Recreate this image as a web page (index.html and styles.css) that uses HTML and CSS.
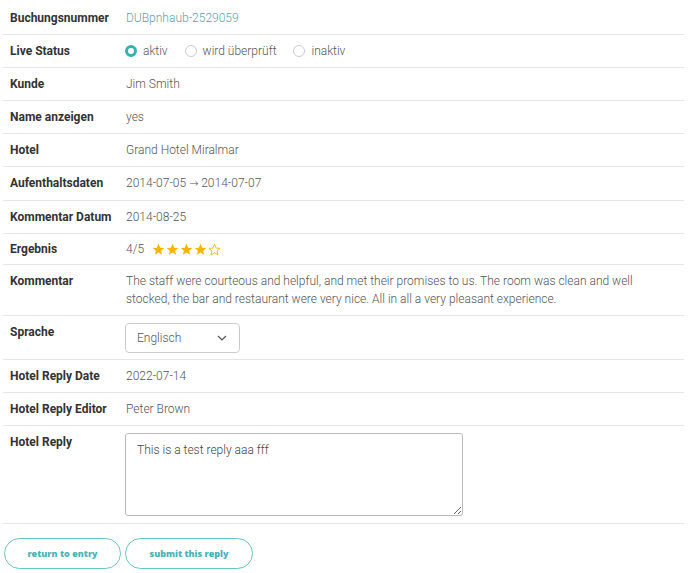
FILE: index.html
```html
<!DOCTYPE html>
<html lang="de">
<head>
    <meta charset="UTF-8">
    <meta name="viewport" content="width=device-width, initial-scale=1.0">
    <title>Hotel Reply</title>
    <link rel="stylesheet" href="styles.css">
</head>
<body>
    <table class="details">
        <tr>
            <th>Buchungsnummer</th>
            <td class="booking">DUBpnhaub-2529059</td>
        </tr>
        <tr>
            <th>Live Status</th>
            <td>
                <label class="radio"><input type="radio" name="status" checked><span class="dot"></span>aktiv</label>
                <label class="radio"><input type="radio" name="status"><span class="dot"></span>wird überprüft</label>
                <label class="radio"><input type="radio" name="status"><span class="dot"></span>inaktiv</label>
            </td>
        </tr>
        <tr>
            <th>Kunde</th>
            <td>Jim Smith</td>
        </tr>
        <tr>
            <th>Name anzeigen</th>
            <td>yes</td>
        </tr>
        <tr>
            <th>Hotel</th>
            <td>Grand Hotel Miralmar</td>
        </tr>
        <tr>
            <th>Aufenthaltsdaten</th>
            <td>2014-07-05 <span class="arrow">&rarr;</span> 2014-07-07</td>
        </tr>
        <tr>
            <th>Kommentar Datum</th>
            <td>2014-08-25</td>
        </tr>
        <tr class="short">
            <th>Ergebnis</th>
            <td class="rating">4/5
                <span class="stars"><svg viewBox="0 0 24 24"><path d="M12 1.5l3.1 7.1 7.6.6-5.8 5 1.8 7.5L12 17.7l-6.7 4 1.8-7.5-5.8-5 7.6-.6z" fill="#f7b500"/></svg><svg viewBox="0 0 24 24"><path d="M12 1.5l3.1 7.1 7.6.6-5.8 5 1.8 7.5L12 17.7l-6.7 4 1.8-7.5-5.8-5 7.6-.6z" fill="#f7b500"/></svg><svg viewBox="0 0 24 24"><path d="M12 1.5l3.1 7.1 7.6.6-5.8 5 1.8 7.5L12 17.7l-6.7 4 1.8-7.5-5.8-5 7.6-.6z" fill="#f7b500"/></svg><svg viewBox="0 0 24 24"><path d="M12 1.5l3.1 7.1 7.6.6-5.8 5 1.8 7.5L12 17.7l-6.7 4 1.8-7.5-5.8-5 7.6-.6z" fill="#f7b500"/></svg><svg viewBox="0 0 24 24"><path d="M12 2.5l3 6.8 7.3.6-5.6 4.8 1.7 7.2L12 18.1l-6.4 3.8 1.7-7.2-5.6-4.8 7.3-.6z" fill="none" stroke="#f7b500" stroke-width="1.7" stroke-linejoin="round"/></svg></span>
            </td>
        </tr>
        <tr>
            <th>Kommentar</th>
            <td>The staff were courteous and helpful, and met their promises to us. The room was clean and well stocked, the bar and restaurant were very nice. All in all a very pleasant experience.</td>
        </tr>
        <tr class="select-row">
            <th>Sprache</th>
            <td>
                <div class="select">
                    <span>Englisch</span>
                    <svg width="10" height="6" viewBox="0 0 10 6"><path d="M1 1l4 4 4-4" fill="none" stroke="#555" stroke-width="1.2"/></svg>
                </div>
            </td>
        </tr>
        <tr>
            <th>Hotel Reply Date</th>
            <td>2022-07-14</td>
        </tr>
        <tr>
            <th>Hotel Reply Editor</th>
            <td>Peter Brown</td>
        </tr>
        <tr>
            <th>Hotel Reply</th>
            <td><textarea class="reply">This is a test reply aaa fff</textarea></td>
        </tr>
    </table>

    <div class="actions">
        <button class="btn">return to entry</button>
        <button class="btn submit">submit this reply</button>
    </div>
</body>
</html>
```

FILE: styles.css
```css
body {
    margin: 0;
    padding: 1px 3px 0;
    font-family: Roboto, "Liberation Sans", sans-serif;
    font-size: 12px;
    color: #666;
    background: #fff;
}
.details {
    width: 681px;
    border-collapse: collapse;
}
.details th,
.details td {
    padding: 7px 7px;
    height: 18px;
    line-height: 18px;
    text-align: left;
    vertical-align: top;
    border-bottom: 1px solid #e6e6e6;
}
.details tr:first-child th,
.details tr:first-child td {
    padding-top: 8px;
}
.details tr.short th,
.details tr.short td {
    padding-top: 6px;
    padding-bottom: 6px;
}
.details tr.select-row th,
.details tr.select-row td {
    padding-bottom: 6px;
}
.details th {
    width: 102px;
    font-weight: bold;
    color: #333;
    white-space: nowrap;
}
.details td {
    color: #555;
    font-weight: 300;
}
.details td.booking {
    color: #5f9fae;
}
.arrow {
    font-family: "DejaVu Sans", sans-serif;
    font-size: 11px;
}
/* radios */
.radio {
    display: inline-block;
    vertical-align: top;
    margin-right: 15px;
}
.radio input {
    display: none;
}
.radio .dot {
    display: inline-block;
    vertical-align: top;
    width: 12px;
    height: 12px;
    box-sizing: border-box;
    border: 1px solid #ccc;
    border-radius: 50%;
    margin: 3px 6px 0 -1px;
}
.radio input:checked + .dot {
    border: 3.5px solid #3aaeb1;
}
/* rating */
.stars {
    display: inline-flex;
    vertical-align: top;
    gap: 1px;
    margin: 3px 0 0 5px;
}
.stars svg {
    width: 13px;
    height: 13px;
}
/* select */
.select {
    width: 115px;
    height: 30px;
    box-sizing: border-box;
    border: 1px solid #ccc;
    border-radius: 4px;
    display: flex;
    align-items: center;
    justify-content: space-between;
    padding: 0 12px 0 11px;
    margin-left: -1px;
    color: #555;
}
.reply {
    display: block;
    width: 338px;
    height: 83px;
    box-sizing: border-box;
    margin: 0 0 0 -1px;
    padding: 8px 11px;
    border: 1px solid #bbb;
    border-radius: 3px;
    font-family: Roboto, "Liberation Sans", sans-serif;
    font-size: 12px;
    font-weight: 300;
    line-height: 16px;
    color: #444;
    resize: both;
}
.actions {
    display: flex;
    gap: 4px;
    margin-top: 14px;
    margin-left: 1px;
}
.btn {
    height: 31px;
    width: 117px;
    border: 1px solid #69c4c6;
    border-radius: 16px;
    background: #fff;
    color: #49b3b5;
    font-family: "Open Sans", sans-serif;
    font-weight: 800;
    font-size: 9px;
}
.btn.submit {
    width: 128px;
}
```
